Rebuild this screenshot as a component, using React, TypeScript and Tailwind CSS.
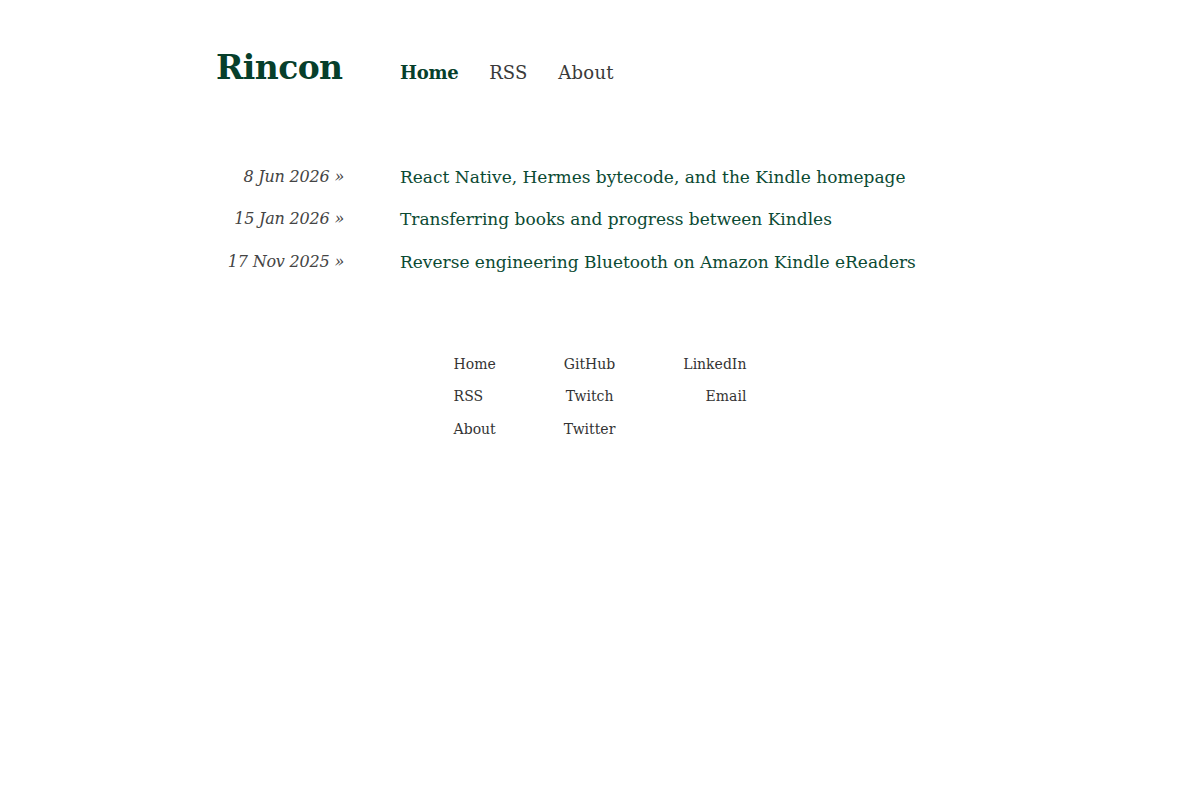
import React from 'react'

const posts = [
    { date: '8 Jun 2026', title: 'React Native, Hermes bytecode, and the Kindle homepage' },
    { date: '15 Jan 2026', title: 'Transferring books and progress between Kindles' },
    { date: '17 Nov 2025', title: 'Reverse engineering Bluetooth on Amazon Kindle eReaders' },
]

const footerCols = [
    { align: 'text-left', links: ['Home', 'RSS', 'About'] },
    { align: 'text-center', links: ['GitHub', 'Twitch', 'Twitter'] },
    { align: 'text-right', links: ['LinkedIn', 'Email'] },
]

export default function App() {
    return (
        <div className="min-h-screen bg-white text-[#3a3a3a]" style={{ fontFamily: '"DejaVu Serif", serif' }}>
            <div className="mx-auto w-[768px] pt-[43px]">
                {/* Header */}
                <header className="grid grid-cols-[128px_1fr] gap-x-14 items-center">
                    <a className="text-left text-[33px] font-bold tracking-[-0.6px] text-[#073f2b]">Rincon</a>
                    <nav className="flex items-center gap-[31px] pt-[9px] text-[18px]">
                        <a className="font-bold text-[#073f2b] tracking-[-0.3px]">Home</a>
                        <a>RSS</a>
                        <a className="tracking-[0.3px]">About</a>
                    </nav>
                </header>

                {/* Posts */}
                <main className="mt-[71px] grid grid-cols-[128px_1fr] gap-x-14 gap-y-[16.5px] text-[17px] leading-[26px]">
                    {posts.map((p) => (
                        <React.Fragment key={p.title}>
                            <div className="text-right text-[16px] italic text-[#444] whitespace-nowrap tracking-[-0.2px]">{p.date} »</div>
                            <a className="text-[#0b4a33]">{p.title}</a>
                        </React.Fragment>
                    ))}
                </main>

                {/* Footer */}
                <footer className="mt-[79px] flex justify-center gap-[68px] text-[14px] leading-[20px] text-[#333]">
                    {footerCols.map((col, i) => (
                        <div key={i} className={`flex flex-col gap-[12.5px] ${col.align}`}>
                            {col.links.map((l) => (
                                <a key={l}>{l}</a>
                            ))}
                        </div>
                    ))}
                </footer>
            </div>
        </div>
    )
}
